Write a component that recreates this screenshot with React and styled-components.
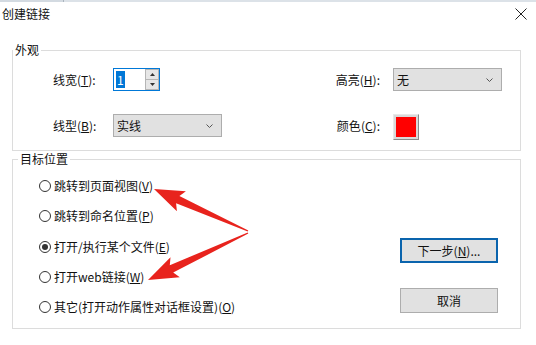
import React from 'react';
import styled, { createGlobalStyle } from 'styled-components';

const Global = createGlobalStyle`
  html, body { margin: 0; padding: 0; background: #fff; }
  body {
    font-family: "Noto Sans CJK SC", "Microsoft YaHei", sans-serif;
    font-size: 12px;
    color: #111;
  }
  #root { width: 536px; height: 345px; }
`;

const Window = styled.div`
  position: relative;
  width: 536px;
  height: 345px;
  background: #fff;
  overflow: hidden;
  display: flex;
  flex-direction: column;
`;

const TopStrip = styled.div`
  height: 2px;
  background: linear-gradient(to right, #d3dae1 0 63px, #aab4be 63px 64px, #dce2e8 64px);
`;

const TitleBar = styled.div`
  height: 24px;
  display: flex;
  align-items: center;
  justify-content: space-between;
  padding: 0 9px 0 2px;
`;

const Title = styled.span`
  font-size: 12px;
  line-height: 16px;
`;

const CloseIcon = styled.svg`
  width: 12px;
  height: 12px;
  display: block;
`;

const Content = styled.div`
  padding: 16px 15px 0 12px;
  display: flex;
  flex-direction: column;
`;

const Group = styled.fieldset`
  margin: 0;
  padding: 0;
  border: 1px solid #dcdcdc;
  min-width: 0;
`;

const Legend = styled.legend`
  padding: 0 2px;
  margin-left: ${p => p.$offset || 0}px;
  font-size: 12px;
  line-height: 16px;
`;

const AppearanceGrid = styled.div`
  display: grid;
  grid-template-columns: 60px 110px 1fr 73px 109px;
  grid-auto-rows: 23px;
  row-gap: 23px;
  padding: 10px 18px 13px 40px;
  align-items: center;
`;

const FieldLabel = styled.span`
  line-height: 16px;
  text-align: ${p => (p.$right ? 'right' : 'left')};
  padding-right: ${p => (p.$right ? '13px' : '0')};
`;

const Spacer = styled.div``;

const Spinner = styled.div`
  width: 47px;
  height: 23px;
  box-sizing: border-box;
  border: 1px solid #0078d7;
  background: #fff;
  display: flex;
`;

const SpinText = styled.div`
  flex: 1;
  display: flex;
  align-items: center;
  padding-left: 2px;
`;

const Selected = styled.span`
  background: #0078d7;
  color: #fff;
  line-height: 17px;
  padding: 0 1px;
`;

const SpinButtons = styled.div`
  width: 14px;
  display: flex;
  flex-direction: column;
`;

const SpinButton = styled.div`
  flex: 1;
  background: #e6e6e6;
  border: 1px solid #b5b5b5;
  margin-top: ${p => (p.$down ? '-1px' : '0')};
  display: flex;
  align-items: center;
  justify-content: center;
`;

const Select = styled.div`
  width: 109px;
  height: 23px;
  box-sizing: border-box;
  border: 1px solid #adadad;
  background: #e1e1e1;
  display: flex;
  align-items: center;
  justify-content: space-between;
  padding: 0 8px 0 3px;
  line-height: 16px;
`;

const Chevron = styled.svg`
  width: 7px;
  height: 4px;
  display: block;
`;

const Swatch = styled.div`
  align-self: start;
  width: 26px;
  height: 26px;
  box-sizing: border-box;
  border: 1px solid;
  border-color: #e8e8e8 #8a8a8a #8a8a8a #e8e8e8;
  background: #d9d9d9;
  padding: 2px;
  display: flex;
`;

const SwatchFill = styled.div`
  flex: 1;
  background: #ff0000;
`;

const TargetBody = styled.div`
  display: flex;
  padding: 4px 22px 6px 26px;
`;

const RadioList = styled.div`
  display: flex;
  flex-direction: column;
`;

const RadioRow = styled.label`
  height: 30.25px;
  display: flex;
  align-items: center;
  gap: 3px;
  line-height: 16px;
`;

const RadioCircle = styled.span`
  width: 12px;
  height: 12px;
  box-sizing: border-box;
  border: 1px solid #333;
  border-radius: 50%;
  background: #fff;
  display: flex;
  align-items: center;
  justify-content: center;
  &::after {
    content: '';
    width: 6px;
    height: 6px;
    border-radius: 50%;
    background: ${p => (p.$checked ? '#333' : 'transparent')};
  }
`;

const ButtonColumn = styled.div`
  margin-left: auto;
  align-self: flex-end;
  display: flex;
  flex-direction: column;
  gap: 25px;
  padding-bottom: 9px;
`;

const DialogButton = styled.button`
  width: 98px;
  height: 25px;
  box-sizing: border-box;
  margin: 0;
  padding: 0;
  font-family: inherit;
  font-size: 12px;
  line-height: 16px;
  color: #111;
  background: #e1e1e1;
  border: ${p => (p.$primary ? '2px solid #0a64ad' : '1px solid #adadad')};
  display: flex;
  align-items: center;
  justify-content: center;
`;

const ArrowLayer = styled.svg`
  position: absolute;
  left: 0;
  top: 0;
  width: 536px;
  height: 345px;
  pointer-events: none;
`;

const U = styled.u`
  text-underline-offset: 1px;
`;

const options = [
  { text: '跳转到页面视图', key: 'V' },
  { text: '跳转到命名位置', key: 'P' },
  { text: '打开/执行某个文件', key: 'E', checked: true },
  { text: '打开web链接', key: 'W' },
  { text: '其它(打开动作属性对话框设置)', key: 'O' },
];

function Label({ text, k, right }) {
  return (
    <FieldLabel $right={right}>
      {text}(<U>{k}</U>):
    </FieldLabel>
  );
}

function DropDown({ value }) {
  return (
    <Select>
      <span>{value}</span>
      <Chevron viewBox="0 0 7 4">
        <path d="M0.5 0.5 L3.5 3.5 L6.5 0.5" fill="none" stroke="#555" strokeWidth="1" />
      </Chevron>
    </Select>
  );
}

// builds a tapered arrow polygon from tail to tip
function arrowPoints(tx, ty, px, py, headLen = 26, headHalf = 11, baseHalf = 4, tailHalf = 0.7) {
  const dx = px - tx;
  const dy = py - ty;
  const len = Math.hypot(dx, dy);
  const ux = dx / len;
  const uy = dy / len;
  const nx = uy;
  const ny = -ux;
  const bx = px - headLen * ux;
  const by = py - headLen * uy;
  const wx = bx - 4 * ux;
  const wy = by - 4 * uy;
  const pts = [
    [tx + tailHalf * nx, ty + tailHalf * ny],
    [bx + baseHalf * nx, by + baseHalf * ny],
    [wx + headHalf * nx, wy + headHalf * ny],
    [px, py],
    [wx - headHalf * nx, wy - headHalf * ny],
    [bx - baseHalf * nx, by - baseHalf * ny],
    [tx - tailHalf * nx, ty - tailHalf * ny],
  ];
  return pts.map(p => p.map(v => v.toFixed(1)).join(',')).join(' ');
}

export default function App() {
  return (
    <>
      <Global />
      <Window>
        <TopStrip />
        <TitleBar>
          <Title>创建链接</Title>
          <CloseIcon viewBox="0 0 12 12">
            <path d="M0.5 0.5 L11.5 11.5 M11.5 0.5 L0.5 11.5" stroke="#222" strokeWidth="1" fill="none" />
          </CloseIcon>
        </TitleBar>
        <Content>
          <Group>
            <Legend>外观</Legend>
            <AppearanceGrid>
              <Label text="线宽" k="T" />
              <Spinner>
                <SpinText>
                  <Selected>1</Selected>
                </SpinText>
                <SpinButtons>
                  <SpinButton>
                    <svg width="5" height="3" viewBox="0 0 5 3"><path d="M0 3 L2.5 0 L5 3 Z" fill="#333" /></svg>
                  </SpinButton>
                  <SpinButton $down>
                    <svg width="5" height="3" viewBox="0 0 5 3"><path d="M0 0 L2.5 3 L5 0 Z" fill="#333" /></svg>
                  </SpinButton>
                </SpinButtons>
              </Spinner>
              <Spacer />
              <Label text="高亮" k="H" right />
              <DropDown value="无" />

              <Label text="线型" k="B" />
              <DropDown value="实线" />
              <Spacer />
              <Label text="颜色" k="C" right />
              <Swatch>
                <SwatchFill />
              </Swatch>
            </AppearanceGrid>
          </Group>
          <Group>
            <Legend $offset={5}>目标位置</Legend>
            <TargetBody>
              <RadioList>
                {options.map(o => (
                  <RadioRow key={o.key}>
                    <RadioCircle $checked={o.checked} />
                    <span>
                      {o.text}(<U>{o.key}</U>)
                    </span>
                  </RadioRow>
                ))}
              </RadioList>
              <ButtonColumn>
                <DialogButton $primary>
                  下一步(<U>N</U>)...
                </DialogButton>
                <DialogButton>取消</DialogButton>
              </ButtonColumn>
            </TargetBody>
          </Group>
        </Content>
        <ArrowLayer viewBox="0 0 536 345">
          <polygon fill="#e8231d" points={arrowPoints(248, 231, 154, 189)} />
          <polygon fill="#e8231d" points={arrowPoints(248, 233, 148, 280)} />
        </ArrowLayer>
      </Window>
    </>
  );
}
